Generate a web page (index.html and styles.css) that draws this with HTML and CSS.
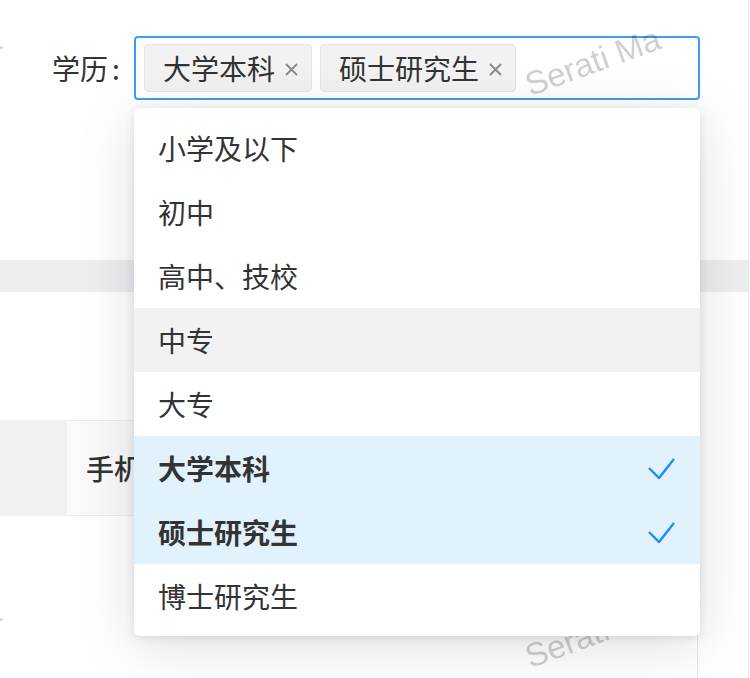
FILE: index.html
```html
<!DOCTYPE html>
<html lang="zh-CN">
<head>
    <meta charset="UTF-8">
    <meta name="viewport" content="width=device-width, initial-scale=1.0">
    <title>学历筛选</title>
    <link rel="stylesheet" href="styles.css">
</head>
<body>
    <div class="page">
        <div class="form-row">
            <label class="form-label">学历<span class="colon">:</span></label>
            <div class="select-wrap">
                <div class="select">
                    <span class="tag">大学本科
                        <svg class="tag-close" width="13" height="13" viewBox="0 0 13 13"><path d="M1 1L12 12M12 1L1 12"/></svg>
                    </span>
                    <span class="tag">硕士研究生
                        <svg class="tag-close" width="13" height="13" viewBox="0 0 13 13"><path d="M1 1L12 12M12 1L1 12"/></svg>
                    </span>
                </div>

                <ul class="dropdown">
                    <li class="option">小学及以下</li>
                    <li class="option">初中</li>
                    <li class="option">高中、技校</li>
                    <li class="option hover">中专</li>
                    <li class="option">大专</li>
                    <li class="option selected">大学本科
                        <svg class="check" width="28" height="22" viewBox="0 0 28 22"><path d="M2 11L12 21L27 2"/></svg>
                    </li>
                    <li class="option selected">硕士研究生
                        <svg class="check" width="28" height="22" viewBox="0 0 28 22"><path d="M2 11L12 21L27 2"/></svg>
                    </li>
                    <li class="option">博士研究生</li>
                </ul>
            </div>
        </div>

        <div class="band"></div>
        <div class="gap"></div>

        <div class="table">
            <div class="table-head">
                <div class="th th-check"></div>
                <div class="th">手机</div>
            </div>
        </div>

        <!-- watermark -->
        <span class="wm wm-1">Serati Ma</span>
        <span class="wm wm-2">Serati Ma</span>
        <span class="wm wm-3">Serati Ma</span>
        <span class="wm wm-4">Serati Ma</span>
    </div>
</body>
</html>
```

FILE: styles.css
```css
body {
    margin: 0;
    background-color: #fff;
    font-family: "Noto Sans CJK SC", "Noto Sans", sans-serif;
    color: #333;
    overflow: hidden;
}

.page {
    position: relative;
    width: 748px;
    height: 678px;
    border-right: 1px solid #e6e6e6;
    overflow: hidden;
}

.form-row {
    display: flex;
    height: 260px;
    box-sizing: border-box;
    padding: 36px 0 0 52px;
}

.form-label {
    width: 82px;
    height: 64px;
    line-height: 64px;
    font-size: 28px;
    color: #333;
}

.colon {
    margin-left: 4px;
}

.select-wrap {
    position: relative;
    width: 566px;
}

.select {
    display: flex;
    gap: 8px;
    height: 64px;
    box-sizing: border-box;
    padding: 6px 8px;
    border: 2px solid #3d9df6;
    border-radius: 4px;
    background-color: rgba(255, 255, 255, 0.6);
}

.tag {
    display: flex;
    align-items: center;
    height: 48px;
    box-sizing: border-box;
    padding: 0 13px 0 18px;
    border: 1px solid #e6e6e6;
    border-radius: 4px;
    background-color: #f2f2f2;
    font-size: 28px;
    line-height: 1;
    color: #333;
}

.tag-close {
    margin-left: 10px;
    margin-top: 2px;
}

.tag-close path {
    stroke: #8a8a8a;
    stroke-width: 1.8;
    fill: none;
}

.dropdown {
    position: absolute;
    top: 72px;
    left: 0;
    z-index: 3;
    width: 566px;
    margin: 0;
    padding: 8px 0;
    list-style: none;
    background-color: #fff;
    border-radius: 6px;
    box-shadow: 0 2px 10px rgba(0, 0, 0, 0.1), 0 10px 60px rgba(0, 0, 0, 0.13);
}

.option {
    display: flex;
    align-items: center;
    justify-content: space-between;
    height: 64px;
    padding: 0 25px 0 24px;
    font-size: 28px;
    color: #333;
}

.option.hover {
    background-color: #f2f2f2;
}

.option.selected {
    background-color: #e1f2fd;
    font-weight: 700;
}

.check path {
    stroke: #1a8cff;
    stroke-width: 2.4;
    fill: none;
}

.band {
    height: 32px;
    background-color: #eceef2;
}

.gap {
    height: 128px;
}

.table {
    width: 697px;
    height: 258px;
    border-top: 1px solid #ececec;
    border-right: 1px solid #e6e6e6;
}

.table-head {
    display: flex;
    height: 94px;
    border-bottom: 1px solid #ececec;
}

.th {
    flex: 1;
    display: flex;
    align-items: center;
    padding-left: 18px;
    background-color: #fafafa;
    font-size: 28px;
    font-weight: 500;
    color: #333;
}

.th-check {
    flex: none;
    width: 67px;
    padding: 0;
    border-right: 1px solid #fafafa;
    background-color: #f1f1f1;
}

.wm {
    position: absolute;
    z-index: 2;
    font-family: "Liberation Sans", Arial, sans-serif;
    font-size: 33px;
    line-height: 1;
    color: rgba(0, 0, 0, 0.2);
    white-space: nowrap;
    transform: rotate(-20deg);
    transform-origin: 0 100%;
    pointer-events: none;
}

.wm-1 { left: 532px; top: 68px; }
.wm-2 { left: -128px; top: 68px; }
.wm-3 { left: 532px; top: 640px; }
.wm-4 { left: -128px; top: 640px; }
```
